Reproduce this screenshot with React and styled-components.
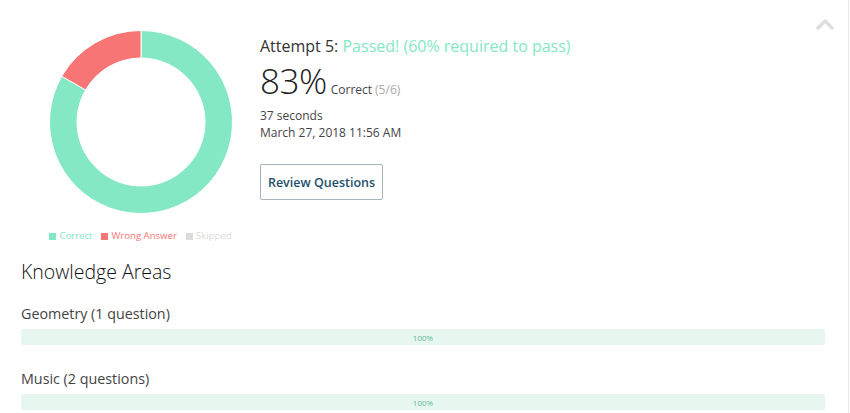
import React from "react";
import styled, { createGlobalStyle } from "styled-components";

const GREEN = "#84e8c4";
const RED = "#f87575";

const GlobalStyle = createGlobalStyle`
  body {
    margin: 0;
    background: #fff;
    font-family: "Open Sans", "Liberation Sans", sans-serif;
    color: #333;
  }
`;

const Page = styled.div`
  position: relative;
  width: 849px;
  height: 413px;
  border-right: 1px solid #e8e8e8;
  padding-left: 21px;
  box-sizing: border-box;
  overflow: hidden;
`;

const Collapse = styled.button`
  position: absolute;
  top: 18px;
  right: 14px;
  border: 0;
  background: none;
  padding: 0;
  cursor: pointer;
  line-height: 0;
`;

const Summary = styled.section`
  display: flex;
  align-items: flex-start;
`;

const ChartColumn = styled.div`
  width: 239px;
  display: flex;
  flex-direction: column;
  align-items: center;
  padding-top: 30px;
`;

const Legend = styled.ul`
  list-style: none;
  margin: 16px 0 0;
  padding: 0;
  display: flex;
  gap: 9px;
  font-size: 9.6px;
  line-height: 12px;
`;

const LegendItem = styled.li`
  display: flex;
  align-items: center;
  gap: 3px;
  color: ${({ $color }) => $color};

  &::before {
    content: "";
    width: 7px;
    height: 7px;
    background: ${({ $color }) => $color};
  }
`;

const Details = styled.div`
  padding-top: 35px;
`;

const AttemptTitle = styled.h2`
  margin: 0;
  font-size: 16px;
  font-weight: 400;
  line-height: 22px;
  color: #333;
`;

const Passed = styled.span`
  color: ${GREEN};
`;

const ScoreRow = styled.div`
  display: flex;
  align-items: baseline;
  margin-top: 2px;
  height: 44px;
`;

const Score = styled.span`
  font-size: 35px;
  font-weight: 300;
  line-height: 44px;
  color: #222;
  margin-right: 4px;
  letter-spacing: -0.5px;
`;

const ScoreLabel = styled.span`
  font-size: 12px;
  color: #444;
`;

const Fraction = styled.span`
  color: #aaa;
  margin-left: 3px;
`;

const Meta = styled.p`
  margin: 0;
  font-size: 12px;
  line-height: 17px;
  color: #444;
`;

const MetaBlock = styled.div`
  margin-top: 4px;
`;

const ReviewButton = styled.button`
  margin-top: 23px;
  width: 123px;
  height: 36px;
  border: 1px solid #a9b4ba;
  border-radius: 2px;
  background: #fff;
  font-family: inherit;
  font-size: 12.5px;
  font-weight: 600;
  color: #1e4f6c;
  cursor: pointer;
  padding: 0;
`;

const Areas = styled.section`
  margin-top: 16px;
  padding-right: 23px;
`;

const AreasTitle = styled.h3`
  margin: 0 0 18px;
  font-size: 19.5px;
  font-weight: 300;
  line-height: 28px;
  color: #111;
`;

const Area = styled.div`
  margin-bottom: 24px;
`;

const AreaName = styled.div`
  font-size: 14.3px;
  line-height: 20px;
  color: #444;
  margin-bottom: 5px;
`;

const Bar = styled.div`
  height: 16px;
  border-radius: 2px;
  background: #e7f7ef;
  display: flex;
  align-items: center;
  justify-content: center;
  font-size: 8px;
  color: #5fb897;
`;

function arc(cx, cy, r0, r1, a0, a1) {
  const p = (r, a) => {
    const rad = ((a - 90) * Math.PI) / 180;
    return [cx + r * Math.cos(rad), cy + r * Math.sin(rad)];
  };
  const large = a1 - a0 > 180 ? 1 : 0;
  const [x0, y0] = p(r1, a0);
  const [x1, y1] = p(r1, a1);
  const [x2, y2] = p(r0, a1);
  const [x3, y3] = p(r0, a0);
  return `M${x0} ${y0} A${r1} ${r1} 0 ${large} 1 ${x1} ${y1} L${x2} ${y2} A${r0} ${r0} 0 ${large} 0 ${x3} ${y3} Z`;
}

function Donut({ correct, total }) {
  const split = (correct / total) * 360;
  return (
    <svg width="184" height="184" viewBox="0 0 184 184">
      <path d={arc(92, 92, 64, 91.5, 0, split)} fill={GREEN} stroke="#fff" strokeWidth="1" />
      <path d={arc(92, 92, 64, 91.5, split, 360)} fill={RED} stroke="#fff" strokeWidth="1" />
    </svg>
  );
}

const areas = [
  { name: "Geometry (1 question)", pct: 100 },
  { name: "Music (2 questions)", pct: 100 },
];

export default function App() {
  return (
    <Page>
      <GlobalStyle />
      <Collapse aria-label="Collapse">
        <svg width="18" height="12" viewBox="0 0 18 12">
          <path d="M2 10 L9 3 L16 10" fill="none" stroke="#dedede" strokeWidth="3.5" strokeLinecap="round" strokeLinejoin="round" />
        </svg>
      </Collapse>
      <Summary>
        <ChartColumn>
          <Donut correct={5} total={6} />
          <Legend>
            <LegendItem $color={GREEN}>Correct</LegendItem>
            <LegendItem $color={RED}>Wrong Answer</LegendItem>
            <LegendItem $color="#dcdcdc">Skipped</LegendItem>
          </Legend>
        </ChartColumn>
        <Details>
          <AttemptTitle>
            Attempt 5: <Passed>Passed! (60% required to pass)</Passed>
          </AttemptTitle>
          <ScoreRow>
            <Score>83%</Score>
            <ScoreLabel>
              Correct<Fraction>(5/6)</Fraction>
            </ScoreLabel>
          </ScoreRow>
          <MetaBlock>
            <Meta>37 seconds</Meta>
            <Meta>March 27, 2018 11:56 AM</Meta>
          </MetaBlock>
          <ReviewButton>Review Questions</ReviewButton>
        </Details>
      </Summary>
      <Areas>
        <AreasTitle>Knowledge Areas</AreasTitle>
        {areas.map((a) => (
          <Area key={a.name}>
            <AreaName>{a.name}</AreaName>
            <Bar>{a.pct}%</Bar>
          </Area>
        ))}
      </Areas>
    </Page>
  );
}
